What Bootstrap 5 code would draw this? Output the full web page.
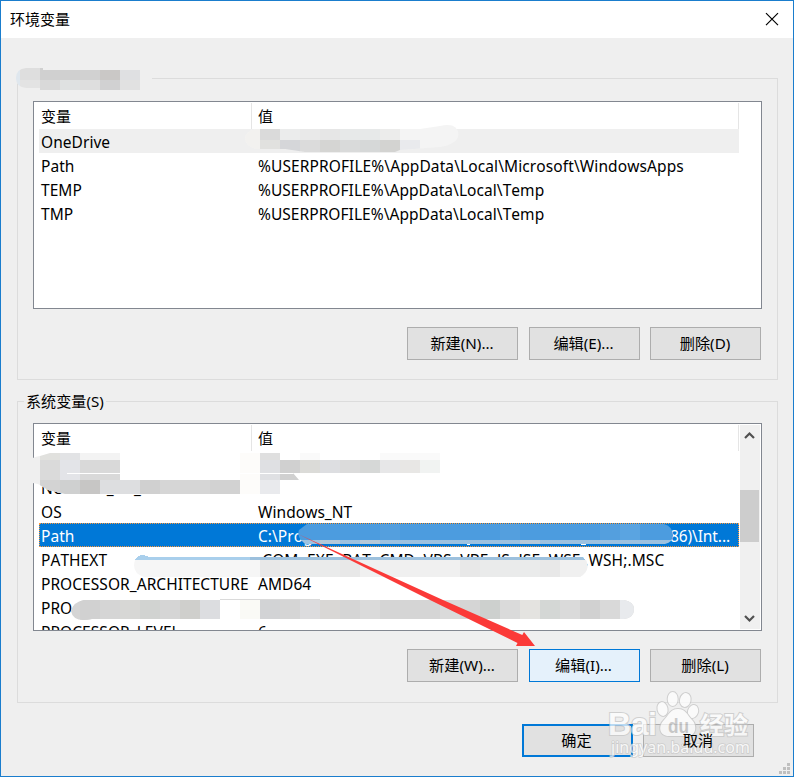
<!DOCTYPE html>
<html lang="zh-CN">
<head>
<meta charset="utf-8">
<meta name="viewport" content="width=device-width, initial-scale=1">
<title>环境变量</title>
<link href="https://cdn.jsdelivr.net/npm/bootstrap@5.3.0/dist/css/bootstrap.min.css" rel="stylesheet">
<style>
body{margin:0;overflow:hidden;font-family:"Noto Sans","Noto Sans CJK SC",sans-serif;font-size:15px;line-height:24px;color:#000}
.dialog{width:794px;height:777px;background:#efefef;border:1px solid #1a7dcd}
.titlebar{height:37px;background:#fff;padding:0 14px 2px 9px}
.close-x{width:14px;height:14px}
.group{margin:0 15px 0 16px;border:1px solid #dcdcdc;height:302px;padding:22px 15px 0}
.group-user{margin-top:40px}
.group-system{margin-top:21px;padding-top:21px}
.group-label{left:6px;top:-13px;padding:0 2px;background:#efefef;font-size:15.100px}
.listview{height:208px;border:1px solid #828790;background:#fff;padding:1px 1px 1px 5px}
.list-rows{width:700px;flex:none}
.head-row{height:26px}
.col-name{width:213px;padding-left:2px;flex:none}
.col-value{padding-left:6px;flex:1}
.head-row .col-name,.head-row .col-value{border-right:1px solid #e5e5e5;height:26px;padding-top:1px}
.item{height:24px;font-size:15.5px;font-kerning:none;padding-top:1px;letter-spacing:.05px}
.item.hot{background:#efefef}
.item.picked{background:#0078d7;color:#fff;outline:1px dotted #ff9838;outline-offset:-1px}
.tail{margin-right:9px;letter-spacing:-.1px}
.long-value{letter-spacing:.1px}
.scroll{width:20px;background:#f0f0f0}
.thumb{height:52px;background:#cdcdcd;margin:37px 1px 0 0;width:19px}
.win-btn{width:111px;height:33px;padding:0 1px 0 0;border:1px solid #adadad;border-radius:0;background:#e1e1e1;color:#000;font-size:15.2px;line-height:31px}
.win-btn.lit{background:#e5f1fb;border-color:#0078d7}
.win-btn.main{border:2px solid #0078d7;line-height:29px}
.win-btn+.win-btn{margin-left:10.5px}
.btn-row{margin:18px 1px 0 0}
.footer-row{margin:21px 39px 0 0}
.label-top{z-index:3}
</style>
</head>
<body>
<div class="dialog position-relative overflow-hidden">
  <header class="titlebar d-flex justify-content-between align-items-center">
    <span>环境变量</span>
    <svg class="close-x" viewBox="0 0 14 14"><path d="M1 1.2 13 13.2M13 1.2 1 13.2" stroke="#000" stroke-width="1.2"/></svg>
  </header>

  <section class="group group-user">
    <div class="listview">
      <div class="list-rows">
        <div class="head-row d-flex"><div class="col-name">变量</div><div class="col-value">值</div></div>
        <div class="item hot d-flex"><div class="col-name">OneDrive</div><div class="col-value"></div></div>
        <div class="item d-flex"><div class="col-name">Path</div><div class="col-value long-value">%USERPROFILE%\AppData\Local\Microsoft\WindowsApps</div></div>
        <div class="item d-flex"><div class="col-name">TEMP</div><div class="col-value">%USERPROFILE%\AppData\Local\Temp</div></div>
        <div class="item d-flex"><div class="col-name">TMP</div><div class="col-value">%USERPROFILE%\AppData\Local\Temp</div></div>
      </div>
    </div>
    <div class="btn-row d-flex justify-content-end">
      <button class="btn win-btn">新建(N)...</button><button class="btn win-btn">编辑(E)...</button><button class="btn win-btn">删除(D)</button>
    </div>
  </section>

  <section class="group group-system position-relative">
    <div class="group-label position-absolute">系统变量(S)</div>
    <div class="listview d-flex justify-content-between overflow-hidden">
      <div class="list-rows">
        <div class="head-row d-flex"><div class="col-name">变量</div><div class="col-value">值</div></div>
        <div class="item"></div>
        <div class="item d-flex"><div class="col-name">NUMBER_OF_PR</div><div class="col-value"></div></div>
        <div class="item d-flex"><div class="col-name">OS</div><div class="col-value">Windows_NT</div></div>
        <div class="item picked d-flex"><div class="col-name">Path</div><div class="col-value d-flex justify-content-between"><span>C:\Prog</span><span class="tail">86)\Int...</span></div></div>
        <div class="item d-flex"><div class="col-name">PATHEXT</div><div class="col-value long-value">.COM;.EXE;.BAT;.CMD;.VBS;.VBE;.JS;.JSE;.WSF;.WSH;.MSC</div></div>
        <div class="item d-flex"><div class="col-name text-nowrap">PROCESSOR_ARCHITECTURE</div><div class="col-value">AMD64</div></div>
        <div class="item d-flex"><div class="col-name">PRO</div><div class="col-value"></div></div>
        <div class="item d-flex"><div class="col-name">PROCESSOR_LEVEL</div><div class="col-value">6</div></div>
      </div>
      <div class="scroll d-flex flex-column">
        <svg width="20" height="28" viewBox="0 0 20 28"><path d="M5 13 9.500 8.500 14 13" fill="none" stroke="#505050" stroke-width="2.200"/></svg>
        <div class="thumb"></div>
        <svg class="mt-auto" width="20" height="20" viewBox="0 0 20 20"><path d="M5 7 9.500 11.500 14 7" fill="none" stroke="#505050" stroke-width="2.200"/></svg>
      </div>
    </div>
    <div class="btn-row d-flex justify-content-end">
      <button class="btn win-btn">新建(W)...</button><button class="btn win-btn lit">编辑(I)...</button><button class="btn win-btn">删除(L)</button>
    </div>
  </section>

  <footer class="footer-row d-flex justify-content-end">
    <button class="btn win-btn main">确定</button><button class="btn win-btn"><span class="label-top position-relative">取消</span></button>
  </footer>

  <!-- Redaction strokes, arrow, watermark and resize grip, in window coordinates -->
  <svg class="position-absolute top-0 start-0 pe-none" width="792" height="775" viewBox="1 1 792 775">
    <defs>
      <clipPath id="c1"><path d="M26 68H43V70H152V90H40V88H26Q16 87 16 78Q16 69 26 68Z"/></clipPath>
      <clipPath id="c2"><path d="M256 129H420L440 126Q458 122 458.500 135Q457 144 440 147L400 150 395 152H305L285 149H256Q245 146 245 138Q246 131 256 129Z"/></clipPath>
      <clipPath id="c3"><path d="M27 462Q32 457 40 456L50 453H440V473H293L299 480H280V494H65L48 490 38 484 27 482Z"/></clipPath>
      <clipPath id="c4"><path d="M307 524H664Q672 526 673 535Q673 542 665 544H305L301 540Q297 535 299 530Z"/></clipPath>
      <clipPath id="c5"><path d="M135 560H586Q591 570 580 577H144Q131 573 135 560Z"/></clipPath>
      <clipPath id="c6"><path d="M84 600H240V619H92Q73 623 71 611Q73 602 84 600ZM240 600H624Q634 602 634 609Q634 618 624 619H240Z"/></clipPath>
    </defs>
    <g shape-rendering="crispEdges">
      <g clip-path="url(#c1)">
        <path fill="#efefef" d="M16 68h137v22H16z"/><path fill="#dfe7ee" d="M16 68h4v20h-4z"/>
        <path fill="#dedede" d="M20 68h20v12H20z"/><path fill="#e3e3e3" d="M20 80h20v10H20z"/>
        <path fill="#d0d0d0" d="M40 68h40v12H40z"/><path fill="#d9d9d9" d="M40 80h20v10H40z"/>
        <path fill="#dfe1e1" d="M60 80h20v10H60z"/><path fill="#d1d1d1" d="M80 68h20v12H80z"/>
        <path fill="#dedede" d="M80 80h20v10H80z"/><path fill="#cac8c6" d="M100 68h20v12h-20z"/>
        <path fill="#d1d1d2" d="M100 80h20v10h-20z"/><path fill="#dfe0e2" d="M120 68h20v12h-20z"/><path fill="#e1e1e1" d="M120 80h20v10h-20z"/>
      </g>
      <g clip-path="url(#c2)">
        <path fill="#f4f4f4" d="M245 122h214v31H245z"/><path fill="#f2f1ef" d="M245 129h15v23h-15z"/>
        <path fill="#dadada" d="M260 129h20v11h-20z"/><path fill="#e1e1df" d="M260 140h20v12h-20z"/>
        <path fill="#ebecec" d="M280 129h20v11h-20z"/><path fill="#d5d6d9" d="M280 140h20v12h-20z"/>
        <path fill="#e9e9e9" d="M300 129h20v11h-20z"/><path fill="#dbdbdb" d="M300 140h20v12h-20z"/>
        <path fill="#e6e6e6" d="M320 129h20v11h-20z"/><path fill="#d5d5d3" d="M320 140h20v12h-20z"/>
        <path fill="#e7e9e9" d="M340 129h40v11h-40z"/><path fill="#d9dada" d="M340 140h20v12h-20z"/><path fill="#d6d8d8" d="M360 140h20v12h-20z"/>
        <path fill="#ececeb" d="M380 129h20v11h-20z"/><path fill="#d3d3d1" d="M380 140h20v12h-20z"/>
        <path fill="#e9eaed" d="M400 140h20v12h-20z"/>
      </g>
      <g clip-path="url(#c3)">
        <path fill="#fff" d="M40 453h400v41H40z"/><path fill="#efefef" d="M27 453h13v41H27z"/>
        <path fill="#e1e1de" d="M40 453h20v7H40z"/><path fill="#e2e3e5" d="M60 453h20v7H60z"/><path fill="#f3f3f3" d="M80 453h40v7H80z"/>
        <path fill="#dadada" d="M40 460h20v20H40z"/><path fill="#e3e4e8" d="M60 460h20v20H60z"/><path fill="#d9d9d9" d="M80 460h40v20H80z"/>
        <path fill="#fff" d="M67 473h53v1H67z"/>
        <path fill="#d3d3d3" d="M40 480h20v14H40z"/><path fill="#cfd0d0" d="M60 480h20v14H60z"/><path fill="#c7c6c5" d="M80 480h20v14H80z"/>
        <path fill="#dddee0" d="M100 480h40v14h-40z"/><path fill="#d0d0d0" d="M140 480h20v14h-20z"/><path fill="#d6d6d6" d="M160 480h50v14h-50z"/><path fill="#d2d2d2" d="M210 480h30v14h-30z"/>
        <path fill="#fdfcfa" d="M240 453h20v41h-20z"/><path fill="#dfdfdf" d="M260 453h20v7h-20z"/><path fill="#dfe0e3" d="M260 460h20v20h-20z"/><path fill="#e9eaed" d="M260 480h20v14h-20z"/>
        <path fill="#fff" d="M240 473h40v1h-40z"/><path fill="#d0d0d0" d="M280 460h20v20h-20z"/><path fill="#fff" d="M280 473h20v1h-20z"/>
        <path fill="#dbdbd8" d="M300 460h20v13h-20z"/><path fill="#dddee1" d="M320 460h20v13h-20z"/><path fill="#dbdbdb" d="M340 460h20v13h-20z"/><path fill="#d6d8d7" d="M360 460h20v13h-20z"/>
        <path fill="#e7e7e8" d="M380 460h20v13h-20z"/><path fill="#e8e7e5" d="M400 460h20v13h-20z"/><path fill="#f1f3f2" d="M420 460h20v13h-20z"/>
        <path fill="#fafafa" d="M300 453h20v7h-20zM380 453h60v7h-60z"/>
      </g>
      <g clip-path="url(#c4)">
        <path fill="#4c9cdf" d="M297 524h377v16H297z"/><path fill="#5aa4e1" d="M620 524h20v16h-20z"/><path fill="#9dc2e0" d="M297 540h377v4H297z"/>
        <path fill="#549fde" d="M380 524h20v16h-20zM500 524h20v16h-20zM600 524h20v16h-20z"/><path fill="#b4c8d8" d="M320 540h20v4h-20zM360 540h20v4h-20zM520 540h20v4h-20z"/>
      </g>
      <path fill="#fff" d="M467 544h3v1h-3zM581 544h5v1h-5z"/>
      <path fill="#a9cfec" d="M135 560Q137 555 143 555Q148 556 149 557H250V560Z"/><path fill="#9cc0dd" d="M250 557H582L586 560H250Z"/>
      <g clip-path="url(#c5)">
        <path fill="#f6f6f6" d="M130 560h460v18H130z"/><path fill="#e8e8e8" d="M260 560h20v18h-20zM460 560h20v18h-20z"/><path fill="#eaebeb" d="M280 560h80v18h-80zM480 560h60v18h-60z"/>
        <path fill="#f0f0f0" d="M360 560h100v18H360zM560 560h30v18h-30z"/><path fill="#e8e8e8" d="M340 560h20v18h-20zM540 560h20v18h-20z"/>
      </g>
      <g clip-path="url(#c6)">
        <path fill="#d5d5d5" d="M70 600h570v22H70z"/><path fill="#d1d1d1" d="M80 600h20v22H80z"/><path fill="#d7d7d5" d="M120 600h20v22h-20z"/><path fill="#d1d3d1" d="M140 600h20v22h-20z"/><path fill="#cfcfcc" d="M180 600h20v22h-20z"/><path fill="#dcdde0" d="M200 600h20v22h-20z"/>
        <path fill="#fff" d="M220 600h20v22h-20z"/><path fill="#fafaf6" d="M240 600h20v22h-20z"/><path fill="#d2d3d5" d="M260 600h20v22h-20z"/><path fill="#dcdcde" d="M300 600h20v22h-20z"/><path fill="#d9d7d5" d="M320 600h20v22h-20z"/>
        <path fill="#dadada" d="M360 600h20v22h-20zM440 600h20v22h-20zM500 600h20v22h-20zM560 600h20v22h-20z"/><path fill="#cdd0ce" d="M480 600h20v22h-20z"/><path fill="#e4e3e0" d="M520 600h20v22h-20z"/><path fill="#d4d7d5" d="M540 600h20v22h-20z"/><path fill="#d1d1d1" d="M580 600h20v22h-20z"/><path fill="#d9d9d9" d="M600 600h20v22h-20z"/><path fill="#e8eaed" d="M620 600h20v22h-20z"/>
      </g>
      <path fill="#dadada" d="M220 599h100v1H220z"/>
      <path fill="#bfbfbf" d="M787 763h3v3h-3zM783 767h3v3h-3zM787 767h3v3h-3zM779 771h3v3h-3zM783 771h3v3h-3zM787 771h3v3h-3z"/>
    </g>
    <path fill="#fb3a38" d="M298 534 443 600 522.300 635 524 632 535 646 516 646 517.500 643 430 600Z"/>
    <g opacity=".72" fill="#fff" stroke="#c4c4c4" stroke-width="2" paint-order="stroke" font-family="Liberation Sans, sans-serif">
      <ellipse cx="662.500" cy="709" rx="5" ry="7" transform="rotate(-12 662.500 709)"/><ellipse cx="672.700" cy="699" rx="5" ry="7"/><ellipse cx="685.300" cy="700" rx="5.300" ry="7" transform="rotate(12 685.300 700)"/><ellipse cx="693" cy="711.500" rx="5" ry="6.500" transform="rotate(18 693 711.500)"/>
      <path d="M678 709C686 709 687 715 692 720C697 725 697 736 687 736H669C659 736 658 726 664 720C669 715 670 709 678 709Z"/>
      <text x="608" y="735" font-size="32" font-weight="bold" textLength="49">Bai</text>
      <text x="668" y="733" font-size="20" font-weight="bold" textLength="21" lengthAdjust="spacingAndGlyphs" stroke="none" fill="#bcbcbc">du</text>
      <text x="700" y="734" font-size="24" font-weight="bold" font-family="Noto Sans CJK SC, sans-serif">经验</text>
      <text x="611" y="753" font-size="16" stroke-width="1.500" font-family="Noto Sans, sans-serif" textLength="139">jingyan.baidu.com</text>
    </g>
  </svg>
</div>
<script src="https://cdn.jsdelivr.net/npm/bootstrap@5.3.0/dist/js/bootstrap.bundle.min.js"></script>
</body>
</html>
